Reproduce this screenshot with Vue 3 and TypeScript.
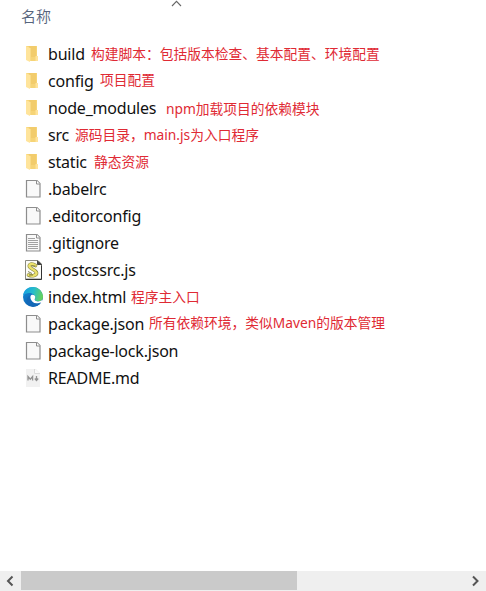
<script setup lang="ts">
type IconKind = 'folder' | 'file' | 'text' | 'script' | 'edge' | 'markdown'

interface Entry {
  name: string
  icon: IconKind
  note?: string
  // Distance from the start of the name to the start of the note
  noteStart?: number
  // Vertical nudge of the note
  shift?: number
}

const entries: Entry[] = [
  { name: 'build', icon: 'folder', note: '构建脚本：包括版本检查、基本配置、环境配置', noteStart: 43 },
  { name: 'config', icon: 'folder', note: '项目配置', noteStart: 52, shift: -1 },
  { name: 'node_modules', icon: 'folder', note: 'npm加载项目的依赖模块', noteStart: 118, shift: 1 },
  { name: 'src', icon: 'folder', note: '源码目录，main.js为入口程序', noteStart: 27 },
  { name: 'static', icon: 'folder', note: '静态资源', noteStart: 46 },
  { name: '.babelrc', icon: 'file' },
  { name: '.editorconfig', icon: 'file' },
  { name: '.gitignore', icon: 'text' },
  { name: '.postcssrc.js', icon: 'script' },
  { name: 'index.html', icon: 'edge', note: '程序主入口', noteStart: 83 },
  { name: 'package.json', icon: 'file', note: '所有依赖环境，类似Maven的版本管理', noteStart: 101, shift: -1 },
  { name: 'package-lock.json', icon: 'file' },
  { name: 'README.md', icon: 'markdown' },
]
</script>

<template>
  <main class="explorer">
    <header class="header">
      <span class="title">名称</span>
      <svg class="sort" viewBox="0 0 11 7"><path d="M1 6 5.500 1.300 10 6" /></svg>
    </header>

    <ul class="list">
      <li v-for="entry in entries" :key="entry.name" class="row">
        <svg class="icon" viewBox="0 0 22 22">
          <g v-if="entry.icon === 'folder'">
            <path d="M4 2h11v11l1 1v3H7l-3-2z" fill="#f6d477" />
            <path d="M7 2h7v11H7z" fill="#f2cc6c" />
            <path d="M4 2l4 2v14l-4-2z" fill="#ffe49b" />
            <path d="M8 4h1v13H8z" fill="#f8da86" />
            <path d="M13.500 12h2.500v5h-2.500z" fill="#ffe39a" />
          </g>
          <g v-else-if="entry.icon === 'file' || entry.icon === 'text'">
            <path d="M4.500 1.500h10.500l3 3v13.500h-13.500z" fill="#f9f9f9" stroke="#8d8d8d" stroke-width="1.200" />
            <path d="M14.500 1.500v3.500h3.500" fill="#fff" stroke="#8d8d8d" />
            <path v-if="entry.icon === 'text'" d="M6 5.500h7M6 7.500h10M6 9.500h10M6 11.500h10M6 13.500h10M6 15.500h10" stroke="#a2a2a2" fill="none" />
          </g>
          <g v-else-if="entry.icon === 'script'">
            <path d="M3.500 0.500h12.500l3.500 3.500v15h-16z" fill="#fcfcf8" stroke="#8a8a82" />
            <path d="M15.500 1v3.500h4z" fill="#444" stroke="#444" />
            <path d="M3.500 19.500h16v-14" fill="none" stroke="#333" />
            <path d="M13.500 5.500C10 3 6.500 4 7.500 6.800c1 2.200 6.500 3.200 7 6 .4 2.700-4.500 3.700-8 2.200" fill="none" stroke="#8a8740" stroke-width="3.600" stroke-linecap="round" />
            <path d="M13.500 5.500C10 3 6.500 4 7.500 6.800c1 2.200 6.500 3.200 7 6 .4 2.700-4.500 3.700-8 2.200" fill="none" stroke="#ece26c" stroke-width="2.400" stroke-linecap="round" />
            <path d="M9.500 6h4M6 11.500l4 2M7 15h4" fill="none" stroke="#66642c" stroke-width=".8" />
          </g>
          <g v-else-if="entry.icon === 'edge'">
            <defs>
              <linearGradient id="edge-top" x1="0" y1=".3" x2="1" y2=".5">
                <stop offset="0" stop-color="#159de2" />
                <stop offset=".5" stop-color="#26bdcb" />
                <stop offset="1" stop-color="#66d35b" />
              </linearGradient>
              <linearGradient id="edge-low" x1="0" y1="0" x2=".7" y2="1">
                <stop offset="0" stop-color="#168bd9" />
                <stop offset="1" stop-color="#0b5ca9" />
              </linearGradient>
            </defs>
            <circle cx="11" cy="10" r="10" fill="url(#edge-low)" />
            <path d="M1 9C2-3 19-3 21 9c.4 4-3 6-6.500 5-2.500-.7-1.500-2-1.200-3C13 6 5 4 1 9z" fill="url(#edge-top)" />
            <path d="M8.500 9c1-2 4.500-1.500 4.700 1 .1 1.500-.9 2-.4 3 1.200 2 5 1.700 7.500.1l.7.9-1.400 2C14 18.500 7.500 14.500 8.500 9z" fill="#fff" />
            <path d="M8.500 8.500c-2.500 3.500 1 8.500 6.500 8 1.500-.1 2.800-.6 4-1.200-4 6.200-12 5.200-14 .2-1-3 .5-6 3.500-7z" fill="#1368b8" />
          </g>
          <g v-else>
            <path d="M4 1h10l4 4v14H4z" fill="#f1f1f1" />
            <path d="M12.500 1v4.500H18" fill="#fafafa" stroke="#dadada" />
            <path d="M6 12.500V8.500l2.300 2.700 2.300-2.700v4M14.500 8v4M12.800 10.500l1.700 2 1.700-2" fill="none" stroke="#929292" stroke-width="1.300" />
          </g>
        </svg>
        <span class="name" :style="{ width: entry.noteStart ? entry.noteStart + 'px' : 'auto' }">{{ entry.name }}</span>
        <span v-if="entry.note" class="note" :style="{ marginTop: (entry.shift ?? 0) * 2 + 'px' }">{{ entry.note }}</span>
      </li>
    </ul>

    <footer class="scrollbar">
      <svg class="arrow" viewBox="0 0 21 20"><path d="M12.500 5.500 8 10l4.500 4.500" /></svg>
      <div class="track"><div class="thumb"></div></div>
      <svg class="arrow" viewBox="0 0 21 20"><path d="M8 5.500 12.500 10 8 14.500" /></svg>
    </footer>
  </main>
</template>

<style>
body {
  background: #fff;
}
</style>

<style scoped>
.explorer {
  display: flex;
  flex-direction: column;
  width: 486px;
  height: 591px;
  overflow: hidden;
  background: #fff;
  font-family: "Noto Sans", "Noto Sans CJK SC", sans-serif;
}
.header {
  display: flex;
  align-items: flex-start;
  height: 41px;
  padding-left: 21px;
  box-sizing: border-box;
}
.title {
  width: 150px;
  padding-top: 5px;
  font: 350 15px/22px "Noto Sans CJK SC", sans-serif;
  color: #56647c;
}
.sort {
  width: 11px;
  height: 7px;
  fill: none;
  stroke: #666;
  stroke-width: 1.1;
}
.list {
  flex: 1;
  margin: 0;
  padding: 0;
  list-style: none;
}
.row {
  display: flex;
  align-items: center;
  height: 27px;
  padding-left: 22px;
  white-space: nowrap;
}
.icon {
  flex: none;
  width: 22px;
  height: 22px;
  margin-right: 4px;
}
.name {
  flex: none;
  font-size: 16px;
  letter-spacing: -0.2px;
  line-height: 27px;
  color: #111;
}
.note {
  padding-bottom: 1px;
  font: 400 13.75px/26px "Noto Sans", "Noto Sans CJK SC", sans-serif;
  color: #df2a34;
}
.scrollbar {
  display: flex;
  height: 20px;
  background: #efefef;
}
.arrow {
  width: 21px;
  height: 20px;
  fill: none;
  stroke: #555;
  stroke-width: 2;
}
.track {
  flex: 1;
}
.thumb {
  width: 276px;
  height: 19px;
  background: #cacaca;
}
</style>
